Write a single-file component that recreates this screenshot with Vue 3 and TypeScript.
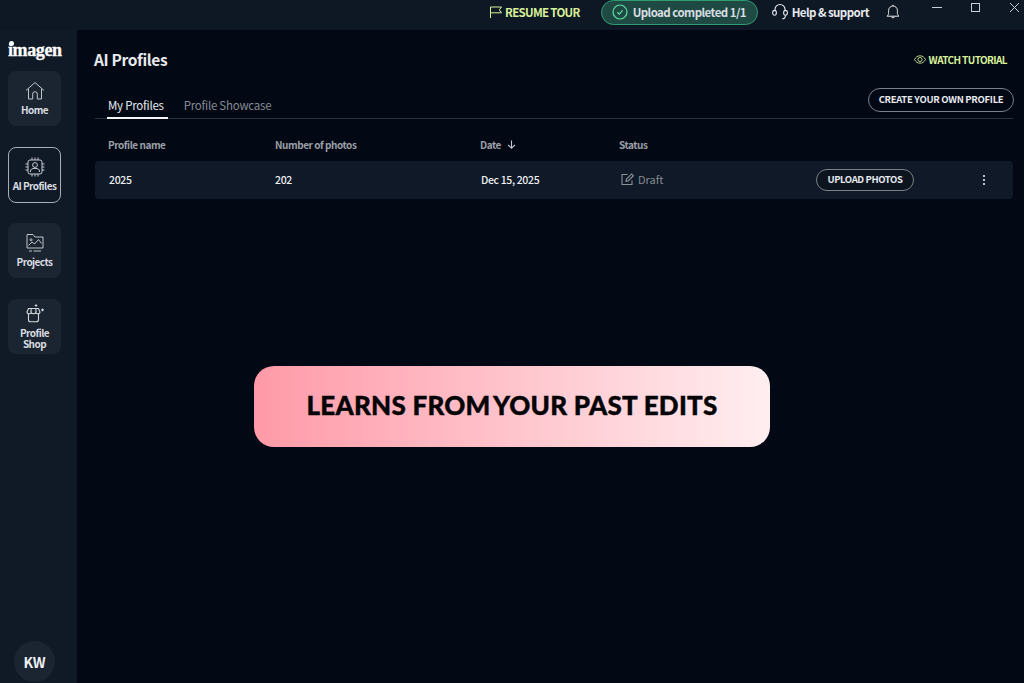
<script setup lang="ts">
const navItems = [
  { id: 'home', label: ['Home'], active: false },
  { id: 'profiles', label: ['AI Profiles'], active: true },
  { id: 'projects', label: ['Projects'], active: false },
  { id: 'shop', label: ['Profile', 'Shop'], active: false },
];
</script>

<template>
  <div class="app">
    <header class="topbar">
      <button class="tour">
        <svg width="14" height="14" viewBox="0 0 14 14" fill="none" stroke="#d8f09a" stroke-width="1">
          <path d="M1.500 13V2h11l-2.200 2.800 2.200 3h-11" />
        </svg>
        RESUME TOUR
      </button>
      <div class="upload">
        <svg width="16" height="16" viewBox="0 0 16 16" fill="none" stroke="#5fe0a6" stroke-width="1.200">
          <circle cx="8" cy="8" r="7" />
          <path d="M5.400 8.300l1.900 1.800 3.300-3.800" />
        </svg>
        Upload completed 1/1
      </div>
      <div class="help">
        <svg width="18" height="18" viewBox="0 0 18 18" fill="none" stroke="#e6e9ee" stroke-width="1.100">
          <path d="M4 7.500V6.500a5 5 0 0 1 10 0v1" />
          <ellipse cx="3.500" cy="9.800" rx="1.900" ry="2.400" />
          <ellipse cx="14.500" cy="9.800" rx="1.900" ry="2.400" />
          <path d="M14.500 12.200c0 2.200-1.200 3.600-3.200 3.600" />
        </svg>
        Help &amp; support
      </div>
      <svg class="bell" width="16" height="16" viewBox="0 0 16 16" fill="none" stroke="#e6e9ee" stroke-width="1">
        <path d="M2 12.200c1.200-1 1.600-2 1.600-3.600V6.400a4.400 4.400 0 0 1 8.800 0v2.200c0 1.600.4 2.600 1.600 3.600z" />
        <path d="M6.300 12.600a1.800 1.800 0 0 0 3.400 0M8 2V.8" />
      </svg>
      <div class="win">
        <svg width="38" height="14" viewBox="0 0 38 14" stroke="#c9ced6" fill="none"><path d="M14 7.500h10" /></svg>
        <svg width="38" height="14" viewBox="0 0 38 14" stroke="#c9ced6" fill="none"><rect x="15.500" y="3.500" width="8" height="8" /></svg>
        <svg width="38" height="14" viewBox="0 0 38 14" stroke="#c9ced6" fill="none"><path d="M16 3l9 9M25 3l-9 9" /></svg>
      </div>
    </header>

    <div class="body">
      <aside class="sidebar">
        <div class="logo">imagen</div>
        <nav class="nav">
          <a v-for="item in navItems" :key="item.id" class="nav-item" :class="{ active: item.active }">
            <svg v-if="item.id === 'home'" width="20" height="20" viewBox="0 0 20 20" fill="none" stroke="#c0c5cc" stroke-width="1">
              <path d="M1 9.500L10 1.500l9 8M3.500 8v10h4.200v-5a2.300 2.300 0 0 1 4.600 0v5h4.200V8" />
            </svg>
            <svg v-else-if="item.id === 'profiles'" width="20" height="20" viewBox="0 0 20 20" fill="none" stroke="#c4c9d1" stroke-width="1">
              <rect x="3" y="3" width="14" height="14" rx="2" />
              <circle cx="10" cy="8" r="2.400" />
              <path d="M5.500 15v-1c0-1.600 1.400-2.600 4.500-2.600s4.500 1 4.500 2.600v1" />
              <path d="M7 3V.5M10 3V.5M13 3V.5M7 19.500V17M10 19.500V17M13 19.500V17M.5 7H3M.5 10H3M.5 13H3M17 7h2.500M17 10h2.500M17 13h2.500" />
            </svg>
            <svg v-else-if="item.id === 'projects'" width="18" height="20" viewBox="0 0 18 20" fill="none" stroke="#c0c5cc" stroke-width="1">
              <path d="M1 15V1.500h6l2 2.500h8v11z" />
              <path d="M2.500 12.500l3.500-3.500 2.500 2 4-4.500 3 4" />
              <circle cx="5" cy="6.800" r="1" />
              <path d="M3 18h3M7.500 18H15" />
            </svg>
            <svg v-else width="20" height="20" viewBox="0 0 20 20" fill="none" stroke="#d3d7dd" stroke-width="1.100">
              <path d="M2 8l1.500-3.500h10L15 8c0 1.200-1 1.800-2.200 1.800-1 0-1.700-.6-2-1.300-.3.700-1 1.300-2.300 1.300s-2-.6-2.300-1.300c-.3.700-1 1.300-2 1.300C3 9.800 2 9.200 2 8z" />
              <path d="M3.500 9.800v6c0 1.200.8 2 2 2h6c1.200 0 2-.8 2-2v-6M6.300 4.500L5.800 8M10.700 4.500l.5 3.500" />
              <path d="M11 .2v2.600M9.700 1.500h2.600M17.500 4.500v2.800M16.100 5.900h2.800" />
            </svg>
            <span class="nav-label">
              <span v-for="line in item.label" :key="line">{{ line }}</span>
            </span>
          </a>
        </nav>
        <div class="avatar">KW</div>
      </aside>

      <main class="main">
        <div class="title-row">
          <h1>AI Profiles</h1>
          <a class="watch">
            <svg width="12" height="9" viewBox="0 0 14 10" fill="none" stroke="#d8f09a" stroke-width="1">
              <path d="M.6 5C2.200 2 4.300.7 7 .7S11.800 2 13.400 5C11.800 8 9.700 9.300 7 9.300S2.200 8 .6 5z" />
              <circle cx="7" cy="5" r="2.400" />
            </svg>
            WATCH TUTORIAL
          </a>
        </div>

        <div class="tabs">
          <span class="tab current">My Profiles</span>
          <span class="tab">Profile Showcase</span>
          <button class="pill create">CREATE YOUR OWN PROFILE</button>
        </div>

        <div class="grid head">
          <span>Profile name</span>
          <span>Number of photos</span>
          <span class="date-head">
            Date
            <svg width="9" height="9" viewBox="0 0 9 9" fill="none" stroke="#c4c8cf" stroke-width="1.100"><path d="M4.500.5v7.500M1 4.800l3.500 3.400L8 4.800" /></svg>
          </span>
          <span>Status</span>
        </div>

        <div class="grid row">
          <span class="cell">2025</span>
          <span class="cell flush">202</span>
          <span class="cell">Dec 15, 2025</span>
          <span class="status">
            <svg width="13" height="13" viewBox="0 0 13 13" fill="none" stroke="#8b9099" stroke-width="1.100">
              <path d="M11 7.500v4H1V1.500h5.500" />
              <path d="M5 8.300l.4-2.300L10.600.9l1.800 1.800-5.200 5.200z" />
            </svg>
            Draft
          </span>
          <button class="pill upload-btn">UPLOAD PHOTOS</button>
          <svg class="more" width="4" height="12" viewBox="0 0 4 12" fill="#e6e9ee">
            <circle cx="2" cy="2" r="1.100" /><circle cx="2" cy="6" r="1.100" /><circle cx="2" cy="10" r="1.100" />
          </svg>
        </div>
      </main>
    </div>

    <div class="banner">LEARNS FROM <span class="tight">YOUR</span> PAST EDITS</div>
  </div>
</template>

<style>
html, body {
  margin: 0;
  background: #020814;
}
</style>

<style scoped>
.app {
  position: relative;
  width: 1024px;
  height: 683px;
  overflow: hidden;
  display: flex;
  flex-direction: column;
  background: #020814;
  color: #eef0f3;
  font-family: "Noto Sans CJK JP", "Noto Sans", sans-serif;
}

button {
  font-family: inherit;
  cursor: pointer;
}

.topbar {
  box-sizing: border-box;
  height: 30px;
  flex: none;
  display: flex;
  align-items: center;
  justify-content: flex-end;
  padding-bottom: 7px;
  background: #0e1724;
  white-space: nowrap;
}

.tour {
  display: flex;
  align-items: center;
  gap: 2px;
  padding: 0;
  border: none;
  background: none;
  color: #d8f09a;
  font-size: 11.500px;
  font-weight: 700;
  letter-spacing: -0.7px;
  margin-right: 21px;
}

.upload {
  display: flex;
  align-items: center;
  align-self: flex-start;
  gap: 5px;
  box-sizing: border-box;
  width: 157px;
  height: 25px;
  padding: 0 0 1px 10px;
  border: 1px solid #2f9c74;
  border-radius: 13px;
  background: #1f4a44;
  color: #d8dde2;
  font-size: 11.500px;
  font-weight: 700;
  letter-spacing: -0.55px;
  margin-right: 13px;
}

.help {
  display: flex;
  align-items: center;
  gap: 3px;
  font-size: 11.500px;
  font-weight: 700;
  letter-spacing: -0.55px;
  color: #e6e9ee;
  margin-right: 16px;
}

.bell {
  margin-right: 17px;
}

.win {
  display: flex;
  align-self: flex-start;
  margin-right: -8px;
}

.body {
  flex: 1;
  display: flex;
  min-height: 0;
}

.sidebar {
  box-sizing: border-box;
  width: 77px;
  flex: none;
  display: flex;
  flex-direction: column;
  align-items: center;
  background: #101926;
  padding: 0 16px 1px 8px;
}

.logo {
  position: relative;
  height: 41px;
  width: 53px;
  font-family: "Liberation Serif", serif;
  font-weight: 700;
  font-size: 18px;
  line-height: 40px;
  letter-spacing: -0.4px;
  -webkit-text-stroke: 0.3px #fff;
  color: #fff;
  white-space: nowrap;
}

.logo::before {
  content: "";
  position: absolute;
  left: 1px;
  top: 11px;
  width: 5px;
  height: 5px;
  border-radius: 50%;
  background: #fff;
}

.nav {
  display: flex;
  flex-direction: column;
  gap: 21px;
}

.nav-item {
  box-sizing: border-box;
  width: 53px;
  height: 55px;
  display: flex;
  flex-direction: column;
  align-items: center;
  justify-content: center;
  gap: 3px;
  border-radius: 8px;
  background: #1b2431;
  color: #d8dbe0;
  font-size: 10px;
  font-weight: 700;
  letter-spacing: -0.55px;
}

.nav-item.active {
  height: 56px;
  margin-bottom: -1px;
  padding-bottom: 1px;
  border: 1px solid #a9aeb6;
  background: #101926;
}

.nav-label {
  display: flex;
  flex-direction: column;
  align-items: center;
  line-height: 11.500px;
  white-space: nowrap;
}

.avatar {
  flex: none;
  margin-top: auto;
  width: 41px;
  height: 41px;
  border-radius: 50%;
  background: #1b2431;
  display: flex;
  align-items: center;
  justify-content: center;
  font-size: 14px;
  font-weight: 700;
}

.main {
  flex: 1;
  min-width: 0;
  padding: 0 11px 0 17px;
}

.title-row {
  display: flex;
  align-items: center;
  justify-content: space-between;
  height: 58px;
}

h1 {
  margin: 0;
  font-size: 15.500px;
  font-weight: 700;
  letter-spacing: -0.35px;
  color: #e8eaee;
}

.watch {
  display: flex;
  align-items: center;
  gap: 3px;
  margin-right: 6px;
  color: #d8f09a;
  font-size: 10px;
  font-weight: 700;
  letter-spacing: -0.6px;
}

.tabs {
  position: relative;
  display: flex;
  align-items: flex-start;
  height: 30px;
  margin-left: 1px;
  padding-left: 12px;
  border-bottom: 1px solid #2a303a;
  gap: 16px;
}

.tab {
  height: 31px;
  line-height: 34px;
  font-size: 11.500px;
  color: #868b93;
  letter-spacing: -0.25px;
}

.tab.current {
  padding: 0 4px 0 1px;
  color: #e6e9ee;
  box-shadow: inset 0 -2px 0 #f4f5f7;
}

.pill {
  background: #0c1420;
  border: 1px solid #7c8189;
  color: #e6e9ee;
  font-weight: 700;
  font-size: 9.500px;
  padding: 0 0 2px;
  border-radius: 12px;
  white-space: nowrap;
}

.create {
  position: absolute;
  right: -1px;
  top: 0;
  width: 146px;
  height: 24px;
  background: transparent;
  letter-spacing: -0.3px;
}

.grid {
  display: grid;
  grid-template-columns: 167px 205px 139px 197px 98px 1fr;
  align-items: center;
  margin-left: 1px;
  padding-left: 13px;
}

.head {
  box-sizing: border-box;
  height: 42px;
  padding-top: 8px;
  font-size: 10px;
  font-weight: 700;
  letter-spacing: -0.45px;
  color: #9a9fa7;
}

.date-head {
  display: flex;
  align-items: center;
  gap: 6px;
}

.row {
  height: 38px;
  border-radius: 4px;
  background: #0f1927;
  font-size: 10.500px;
  font-weight: 500;
  letter-spacing: -0.35px;
  color: #eef0f3;
}

.cell {
  padding: 0 0 2px 1px;
}

.cell.flush {
  padding-left: 0;
}

.status {
  display: flex;
  align-items: center;
  gap: 4px;
  padding: 0 0 2px 2px;
  font-size: 11px;
  font-weight: 400;
  letter-spacing: 0;
  color: #868b93;
}

.upload-btn {
  height: 22px;
  width: 98px;
  letter-spacing: -0.4px;
}

.more {
  justify-self: start;
  margin-left: 68px;
}

.banner {
  position: absolute;
  left: 254px;
  top: 366px;
  width: 516px;
  height: 81px;
  border-radius: 20px;
  background: linear-gradient(90deg, #ff9aa8 0%, #ffeef0 100%);
  text-align: center;
  line-height: 78px;
  color: #050508;
  font-family: Lato, sans-serif;
  font-size: 26px;
  font-weight: 900;
  letter-spacing: 0.25px;
  -webkit-text-stroke: 0.4px #050508;
  white-space: nowrap;
}

.tight {
  margin-left: -4px;
}
</style>
